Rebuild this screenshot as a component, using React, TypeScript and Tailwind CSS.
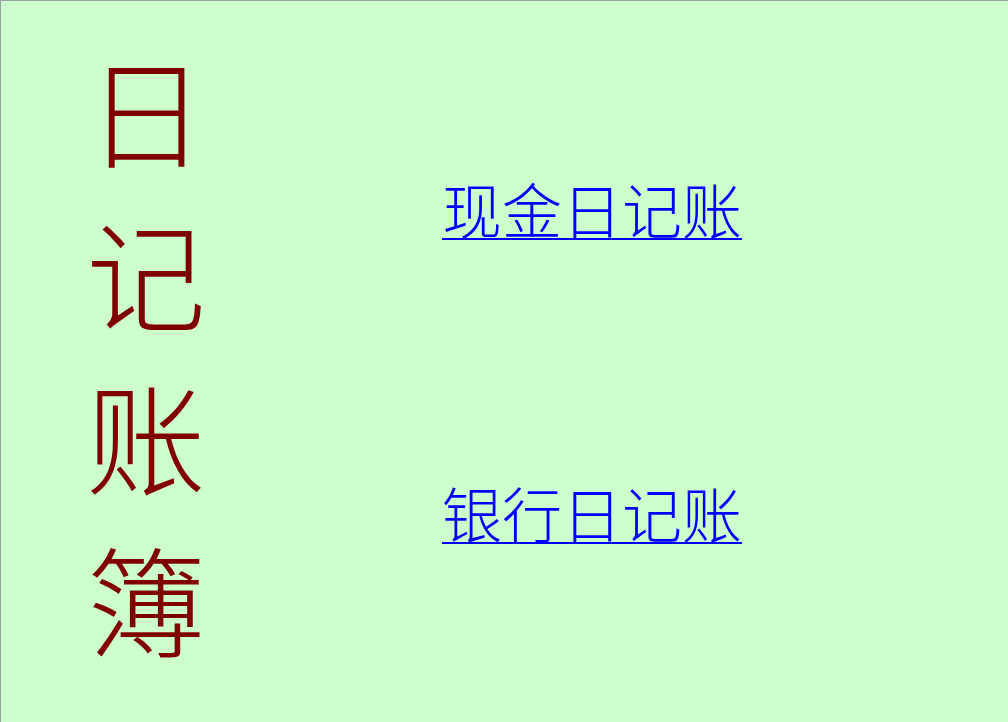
export default function App() {
  const font = { fontFamily: '"Noto Sans CJK SC", "Noto Sans", sans-serif' };
  return (
    <div
      className="w-[1008px] h-[722px] bg-[#ccffcc] border-t border-l border-[#a0a0a0] flex overflow-hidden"
      style={font}
    >
      <div className="pl-[85px] pt-[26px] w-[206px] shrink-0">
        <div className="w-[120px] text-center text-[120px] leading-[163px] font-light text-[#800000] flex flex-col">
          <span>日</span>
          <span>记</span>
          <span>账</span>
          <span>簿</span>
        </div>
      </div>
      <div className="ml-[235px] pt-[177px] flex flex-col gap-[244px]">
        <a href="#" className="text-[60px] leading-[60px] font-light text-[#0000ff] underline decoration-[2px] underline-offset-[4px] whitespace-nowrap">
          现金日记账
        </a>
        <a href="#" className="text-[60px] leading-[60px] font-light text-[#0000ff] underline decoration-[2px] underline-offset-[4px] whitespace-nowrap">
          银行日记账
        </a>
      </div>
    </div>
  );
}
